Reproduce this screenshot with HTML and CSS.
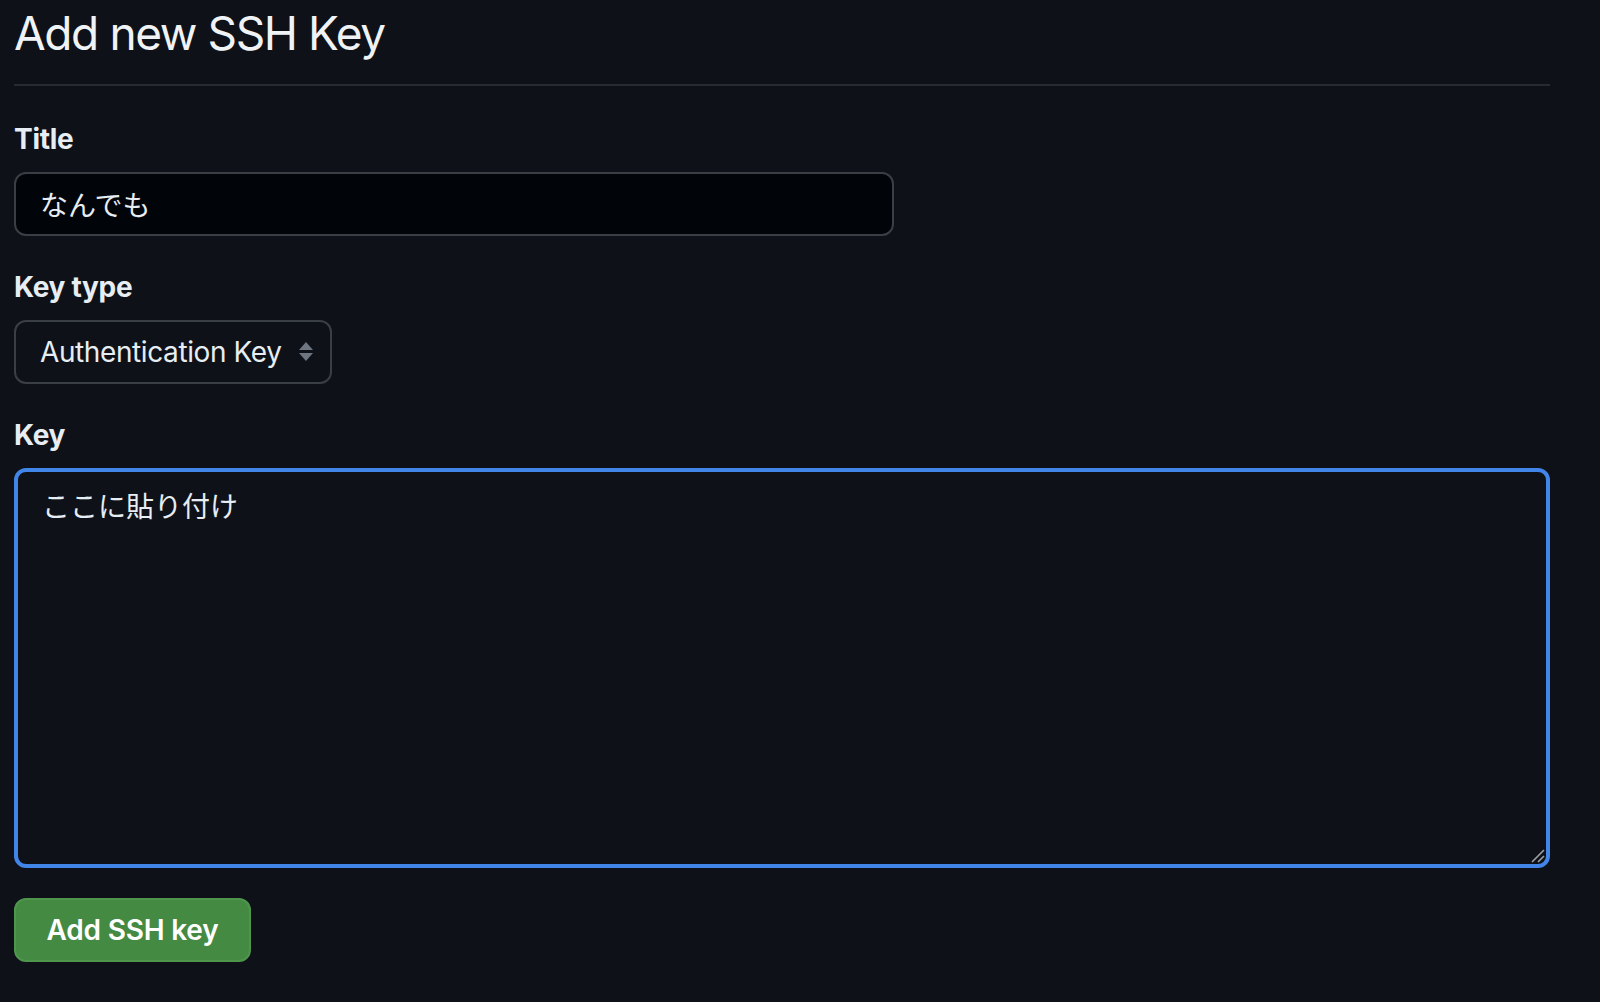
FILE: index.html
```html
<!DOCTYPE html>
<html lang="ja">
<head>
<meta charset="utf-8">
<title>Add new SSH Key</title>
<link rel="stylesheet" href="styles.css">
</head>
<body>
<div class="page">
  <h1 class="subhead">Add new SSH Key</h1>
  <form class="form">
    <div class="form-group">
      <label class="label">Title</label>
      <div class="input">なんでも</div>
    </div>
    <div class="form-group">
      <label class="label">Key type</label>
      <div class="select">
        <span>Authentication Key</span>
        <svg class="arrows" width="16" height="20" viewBox="0 0 16 20"><path d="M8 0 L15 8 L1 8 Z" fill="#6e7681"/><path d="M1 11 L15 11 L8 19 Z" fill="#6e7681"/></svg>
      </div>
    </div>
    <div class="form-group">
      <label class="label">Key</label>
      <div class="textarea">ここに貼り付け
        <svg class="grip" width="14" height="14" viewBox="0 0 14 14"><path d="M13 1 L1 13 M13 7 L7 13" stroke="#9aa0a6" stroke-width="1.6"/></svg>
      </div>
    </div>
    <div class="actions">
      <button type="button" class="btn-primary">Add SSH key</button>
    </div>
  </form>
</div>
</body>
</html>
```
FILE: styles.css
```css
html, body {
  margin: 0;
  padding: 0;
  background: #0e1117;
}
body {
  font-family: Inter, "Liberation Sans", "Noto Sans CJK JP", sans-serif;
  color: #e6edf3;
}
.page {
  width: 1536px;
  padding-left: 14px;
}
.subhead {
  margin: 0;
  font-size: 46px;
  font-weight: 400;
  line-height: 60px;
  letter-spacing: -1.4px;
  padding-top: 3px;
  padding-bottom: 21px;
  border-bottom: 2px solid #262a31;
  color: #f0f3f6;
}
.form {
  padding-top: 32px;
}
.form-group {
  margin-bottom: 30px;
}
.label {
  display: block;
  font-size: 28px;
  font-weight: 700;
  line-height: 42px;
  margin-bottom: 12px;
  letter-spacing: -0.3px;
}
.input {
  box-sizing: border-box;
  width: 880px;
  height: 64px;
  border: 2px solid #3a3f46;
  border-radius: 12px;
  background: #010409;
  padding: 0 24px;
  display: flex;
  align-items: center;
  font-size: 28px;
  font-family: "Noto Sans CJK JP", sans-serif;
  color: #e6edf3;
}
.select {
  box-sizing: border-box;
  width: 318px;
  height: 64px;
  border: 2px solid #3a3f46;
  border-radius: 12px;
  background: #0e1117;
  padding: 0 16px 0 24px;
  display: flex;
  align-items: center;
  justify-content: space-between;
  font-size: 28px;
  letter-spacing: -0.4px;
}
.textarea {
  position: relative;
  box-sizing: border-box;
  width: 1536px;
  height: 400px;
  border: 4px solid #4285e8;
  border-radius: 12px;
  background: #0e1117;
  padding: 12px 24px;
  font-size: 28px;
  line-height: 42px;
  font-family: "Noto Sans CJK JP", sans-serif;
  color: #e6edf3;
}
.grip {
  position: absolute;
  right: 1px;
  bottom: 1px;
}
.actions {
  margin-top: 30px;
}
.btn-primary {
  box-sizing: border-box;
  height: 64px;
  width: 237px;
  border: 2px solid #4f964d;
  border-radius: 12px;
  background: #448a43;
  color: #ffffff;
  font-family: Inter, "Liberation Sans", sans-serif;
  font-size: 28px;
  font-weight: 600;
  letter-spacing: -0.2px;
  padding: 0 30px;
  cursor: pointer;
}
```
